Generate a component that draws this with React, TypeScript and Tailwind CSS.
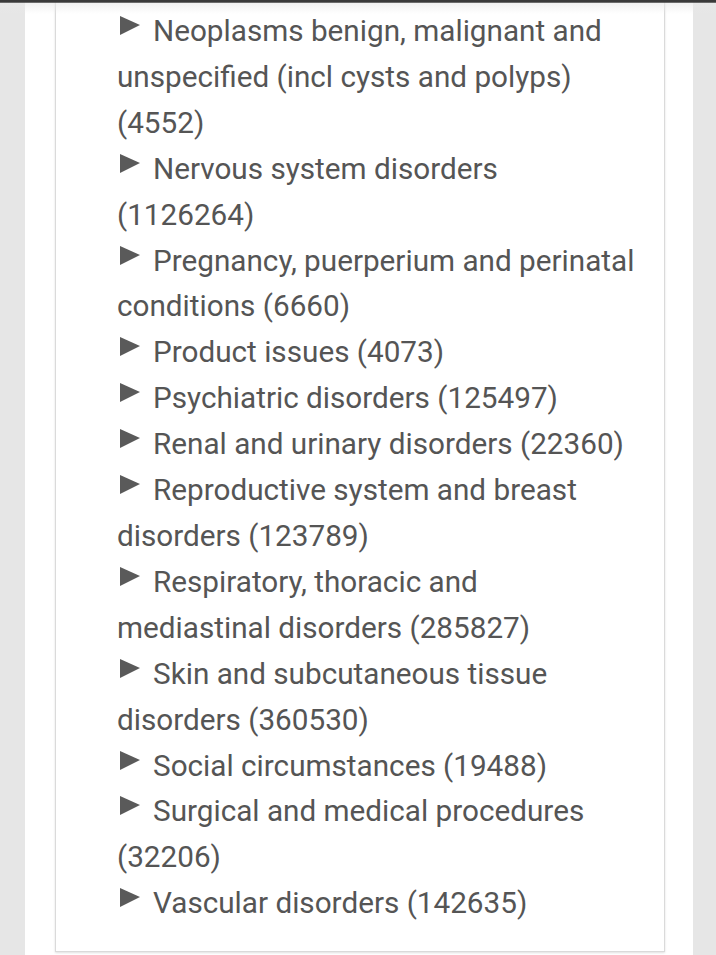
const ITEMS: { label: string; count: number }[] = [
  { label: "Neoplasms benign, malignant and unspecified (incl cysts and polyps)", count: 4552 },
  { label: "Nervous system disorders", count: 1126264 },
  { label: "Pregnancy, puerperium and perinatal conditions", count: 6660 },
  { label: "Product issues", count: 4073 },
  { label: "Psychiatric disorders", count: 125497 },
  { label: "Renal and urinary disorders", count: 22360 },
  { label: "Reproductive system and breast disorders", count: 123789 },
  { label: "Respiratory, thoracic and mediastinal disorders", count: 285827 },
  { label: "Skin and subcutaneous tissue disorders", count: 360530 },
  { label: "Social circumstances", count: 19488 },
  { label: "Surgical and medical procedures", count: 32206 },
  { label: "Vascular disorders", count: 142635 },
];

function Arrow() {
  return (
    <svg
      className="mr-[13px] ml-[3px] inline-block align-[6px]"
      width="20"
      height="19"
      viewBox="0 0 20 19"
    >
      <path d="M0 0 L20 9 L0 19 Z" fill="#5a5a5a" />
    </svg>
  );
}

export default function App() {
  return (
    <div className="relative flex min-h-screen bg-[#e6e6e6] font-['Roboto',sans-serif]">
      {/* top bar shadow */}
      <div className="pointer-events-none absolute inset-x-0 top-0 h-[14px] bg-gradient-to-b from-[#3a3a3a] from-[15%] via-[#e9e9e9]/60 via-[25%] to-transparent" />

      <div className="ml-[25px] w-[668px] bg-white pl-[30px] pr-[28px]">
        <div className="h-[952px] border-x border-b border-[#dadada] bg-white pl-[61px] pr-[26px] pt-[8px] shadow-[0_1px_2px_rgba(0,0,0,0.12)]">
          <ul className="text-[29.7px] leading-[45.9px] text-[#555555]">
            {ITEMS.map((item) => (
              <li key={item.label}>
                <Arrow />
                {item.label} ({item.count})
              </li>
            ))}
          </ul>
        </div>
      </div>
    </div>
  );
}
